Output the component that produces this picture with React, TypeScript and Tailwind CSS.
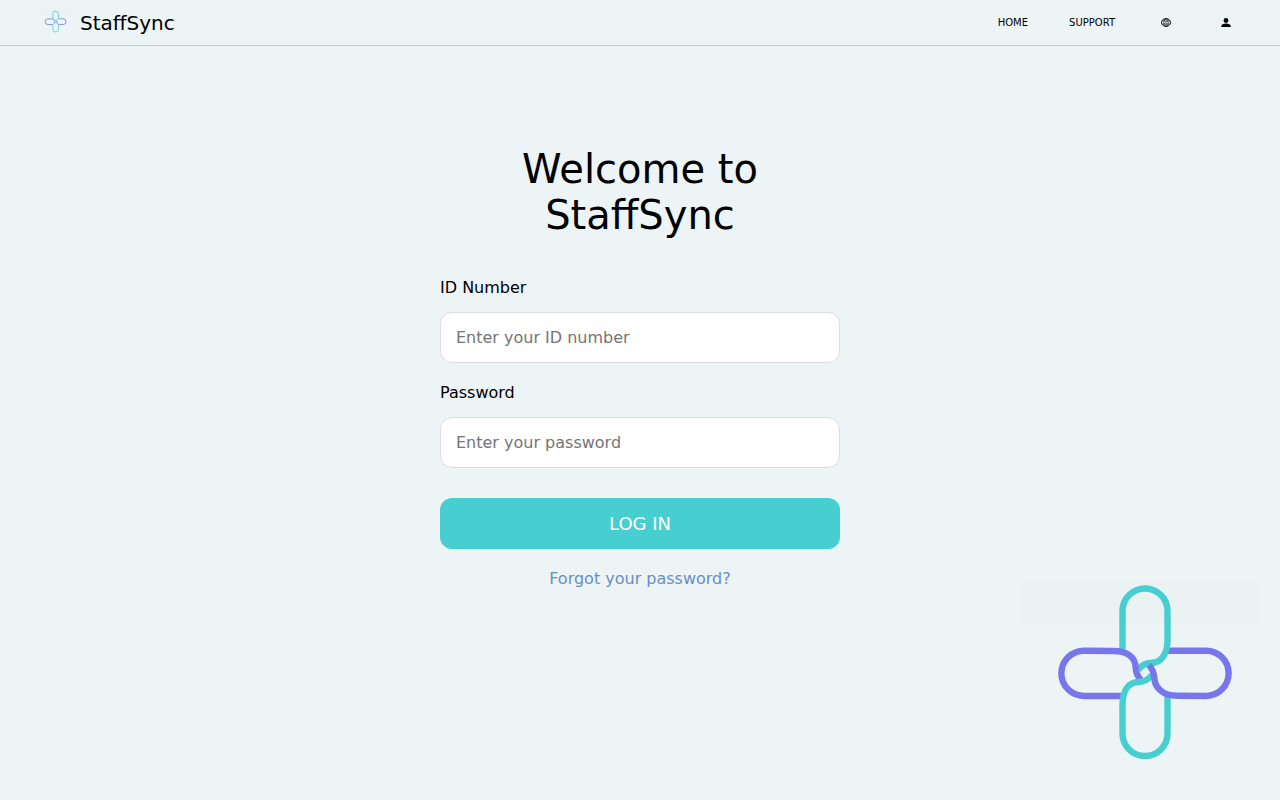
import { useState } from 'react';
import type { FormEvent } from 'react';

const fields = [
  {
    id: 'idNumber',
    label: 'ID Number',
    type: 'text',
    placeholder: 'Enter your ID number',
  },
  {
    id: 'password',
    label: 'Password',
    type: 'password',
    placeholder: 'Enter your password',
  },
];

const Logo = ({ className }: { className: string }) => (
  <svg
    className={className}
    viewBox="0 0 240 200"
    fill="none"
    strokeWidth="6.4"
    aria-hidden="true"
  >
    <path d="M0 0H240V44H0Z" fill="#e9f1f3" fillOpacity="0.4" />
    <path d="M0 0H240V17H0Z" fill="#e9f1f3" fillOpacity="0.6" />
    {/* right loop goes under the top one, its lower end is drawn last */}
    <path stroke="#7777eb" d="M146 70.7H186a22.65 22.65 0 0 1 0 45.3" />
    <path
      stroke="#47ced1"
      d="M102.5 71V31a22.5 22.5 0 0 1 45 0V60C147.5 73 142 83 131 83C125 83 121 86 118 90"
    />
    <path
      stroke="#7777eb"
      d="M102 116L64 116a22.65 22.65 0 0 1 0-45.3L93 71C107 71 115.5 77 115.7 88C116 93 118 97 121 100"
    />
    <path
      stroke="#47ced1"
      d="M147.5 114V153.5a22.5 22.5 0 0 1-45 0V125C102.5 111 108 102 119 102C125 102 129 98.5 132 95"
    />
    <path
      stroke="#7777eb"
      d="M186 116L157 115.7C143 115.7 135 108 134.3 98C134 93 132.5 89 129 85"
    />
  </svg>
);

const GlobeIcon = () => (
  <svg
    className="w-[10px] h-[9px]"
    viewBox="0 0 10 9"
    fill="none"
    stroke="black"
    strokeWidth="0.9"
    aria-hidden="true"
  >
    <ellipse cx="5" cy="4.5" rx="4.5" ry="3.9" />
    <ellipse cx="5" cy="4.5" rx="2.2" ry="3.9" strokeWidth="0.7" />
    <path d="M5 0.6V8.4M1 3H9M1 6H9" strokeWidth="0.5" />
  </svg>
);

const UserIcon = () => (
  <svg className="w-[10px] h-[9px]" viewBox="0 0 10 9" aria-hidden="true">
    <circle cx="5" cy="2.5" r="2.4" />
    <path d="M0.3 9V8C0.3 6.2 2.5 5.4 5 5.4S9.7 6.2 9.7 8V9Z" />
  </svg>
);

const Header = () => (
  <header className="flex items-center justify-between border-b border-[#c5cacd] py-[10px] pl-10 pr-[45px]">
    <div className="flex items-center gap-[10px]">
      <Logo className="w-[30px] h-[25px]" />
      <span className="text-xl leading-6">StaffSync</span>
    </div>
    <nav className="flex items-center gap-[41px] text-[10px] leading-3">
      <a href="#home">HOME</a>
      <a href="#support">SUPPORT</a>
      <button
        type="button"
        aria-label="Language"
        className="flex w-[19px] justify-center"
      >
        <GlobeIcon />
      </button>
      <button
        type="button"
        aria-label="Account"
        className="flex w-[19px] justify-center"
      >
        <UserIcon />
      </button>
    </nav>
  </header>
);

const App = () => {
  const [values, setValues] = useState<Record<string, string>>({});

  const handleSubmit = (e: FormEvent) => {
    e.preventDefault();
  };

  return (
    <div className="relative min-h-screen bg-[#ecf4f6] font-['DejaVu_Sans',sans-serif] text-black">
      <Header />
      <main className="mx-auto w-full max-w-[400px] pt-[100px]">
        <h1 className="mb-10 text-center text-[40px] leading-[46px]">
          Welcome to StaffSync
        </h1>
        <form onSubmit={handleSubmit} className="flex flex-col">
          {fields.map((field) => (
            <div key={field.id} className="mb-5 flex flex-col gap-[15px]">
              <label htmlFor={field.id} className="text-base leading-[19px]">
                {field.label}
              </label>
              <input
                id={field.id}
                type={field.type}
                placeholder={field.placeholder}
                value={values[field.id] ?? ''}
                onChange={(e) =>
                  setValues({ ...values, [field.id]: e.target.value })
                }
                className="h-[51px] w-full rounded-xl border border-[#dddddd] bg-white px-[15px] text-base placeholder:text-[#757575]"
              />
            </div>
          ))}
          <button
            type="submit"
            className="mt-[10px] h-[51px] w-full rounded-xl bg-[#47ced1] text-lg text-white"
          >
            LOG IN
          </button>
          <a
            href="#forgot"
            className="mt-5 self-center text-base leading-[19px] text-[#6b8dc4]"
          >
            Forgot your password?
          </a>
        </form>
      </main>
      <div className="pointer-events-none absolute bottom-5 right-5">
        <Logo className="w-[240px] h-[200px]" />
      </div>
    </div>
  );
};

export default App;
